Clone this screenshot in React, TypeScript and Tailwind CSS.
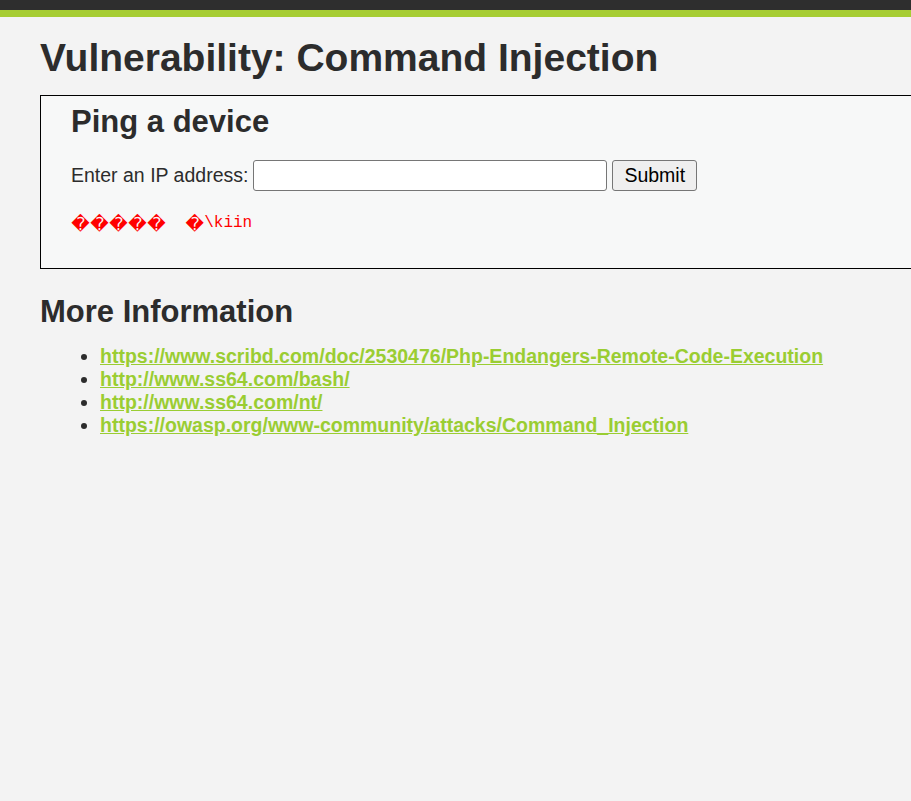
const links = [
  "https://www.scribd.com/doc/2530476/Php-Endangers-Remote-Code-Execution",
  "http://www.ss64.com/bash/",
  "http://www.ss64.com/nt/",
  "https://owasp.org/www-community/attacks/Command_Injection",
];

// garbled ping output, as the reference shows it
const Bad = () => (
  <span className="inline-block w-[19px] text-center text-[18px] leading-none align-[-3px] font-['DejaVu_Sans',sans-serif]">
    {"\uFFFD"}
  </span>
);

export default function App() {
  return (
    <div className="min-h-screen overflow-hidden bg-[#f3f3f3] text-[#2c2c2c] font-['Liberation_Sans',Arial,sans-serif]">
      <div className="h-[10px] bg-[#2e2e2e]" />
      <div className="h-[7px] bg-[#a6cd33]" />

      <div className="pl-[40px]">
        <h1 className="mt-[21px] text-[39px] leading-none font-bold whitespace-nowrap">
          Vulnerability: Command Injection
        </h1>

        <div className="mt-[18px] w-[1000px] border border-black bg-[#f7f8f8] pl-[30px] pt-[10px] h-[174px]">
          <h2 className="text-[31px] leading-none font-bold">Ping a device</h2>
          <form className="mt-[23px] flex items-center text-[19.5px]" onSubmit={(e) => e.preventDefault()}>
            <label className="mr-[5px]">Enter an IP address:</label>
            <input
              type="text"
              className="h-[31px] w-[354px] rounded-[3px] border border-[#767676] bg-white px-1"
            />
            <button
              type="submit"
              className="ml-[5px] h-[31px] rounded-[3px] border border-[#767676] bg-[#efefef] px-[11px] text-[19.5px] text-black"
            >
              Submit
            </button>
          </form>
          <pre className="mt-[22px] text-[16px] leading-[20px] text-[#ff0000] font-['Liberation_Mono','DejaVu_Sans_Mono',monospace]">
            <Bad />
            <Bad />
            <Bad />
            <Bad />
            <Bad />
            {"  "}
            <Bad />
            {"\\kiin"}
          </pre>
        </div>

        <h2 className="mt-[27px] text-[31px] leading-none font-bold">More Information</h2>
        <ul className="mt-[18px] list-disc pl-[60px] text-[19.5px] leading-[23px] font-bold marker:text-[#2c2c2c]">
          {links.map((l) => (
            <li key={l}>
              <a href={l} className="text-[#9acd32] underline">
                {l}
              </a>
            </li>
          ))}
        </ul>
      </div>
    </div>
  );
}
